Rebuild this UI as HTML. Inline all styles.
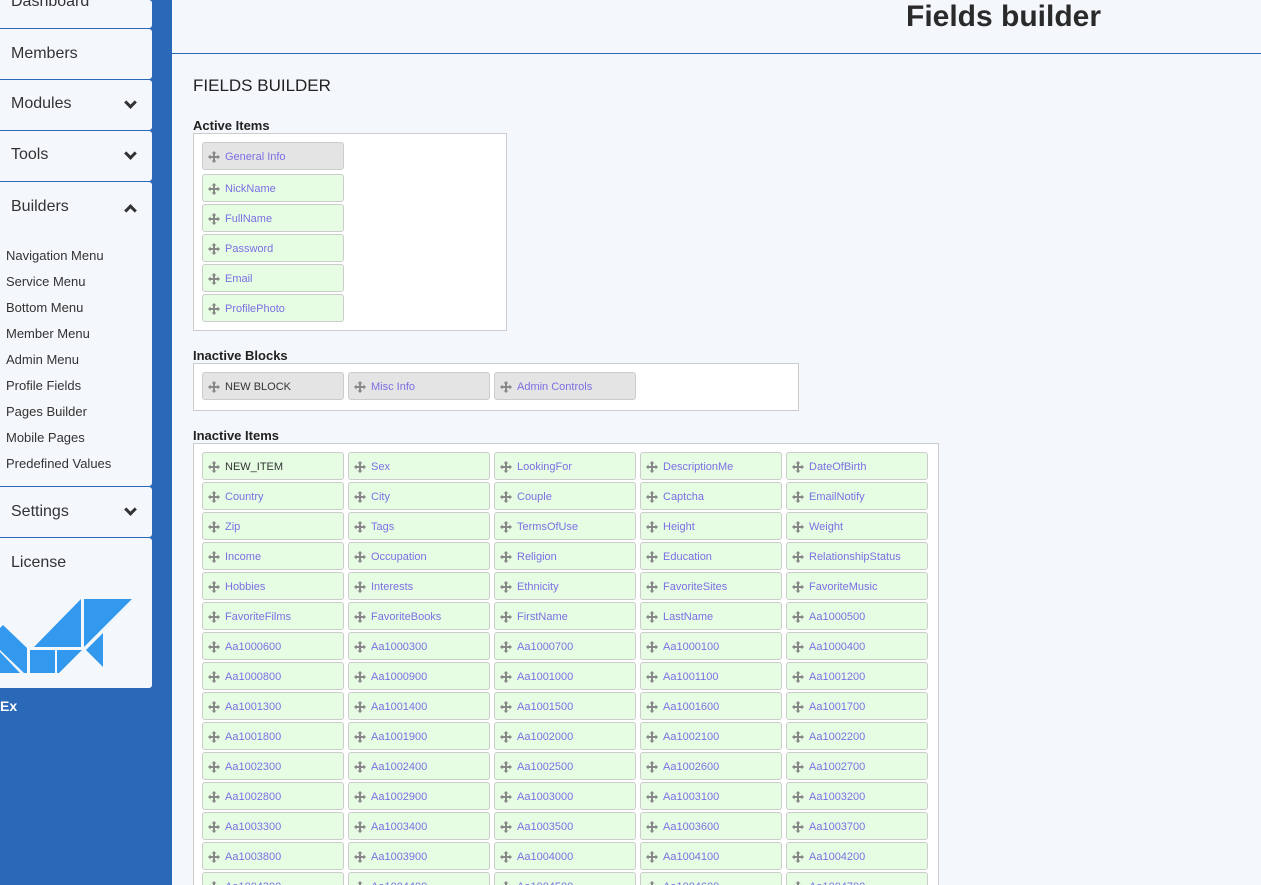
<!DOCTYPE html>
<html><head><meta charset="utf-8"><style>
*{margin:0;padding:0;box-sizing:border-box}
html,body{width:1261px;height:885px;overflow:hidden}
body{background:#f4f7fb;font-family:"Liberation Sans",Arial,sans-serif;position:relative}
.sb{position:absolute;left:0;top:0;width:172px;height:885px;background:#2a69b8}
.p{position:absolute;left:0;width:152px;background:#f4f7fb;border-radius:0 3px 3px 0;overflow:hidden}
.p .t{position:absolute;left:11px;font-size:16px;color:#333}
.chev{position:absolute;left:126px;width:9px;height:9px;border-right:3px solid #333;border-bottom:3px solid #333}
.sub{position:absolute;left:6px;font-size:13px;color:#333}
.hdr{position:absolute;left:172px;top:0;right:0;height:54px;border-bottom:1px solid #2a69b8}
h1{position:absolute;top:0;font-size:30px;font-weight:bold;color:#2a2a2a}
.lbl{position:absolute;left:193px;font-size:13px;font-weight:bold;color:#222}
.box{position:absolute;background:#fff;border:1px solid #ccc}
.it{position:absolute;width:142px;height:28px;border:1px solid #ccc;border-radius:3px;background:#e6fde4;font-size:11px;color:#7b6fe3;line-height:28px;padding-left:22px;white-space:nowrap;overflow:hidden}
.it.g{background:#e4e4e4}
.it.k{color:#333}
.it svg{position:absolute;left:5px;top:8px}
</style></head><body>
<div class="sb">
<div class="p" style="top:0;height:28px"><span class="t" style="top:-7px">Dashboard</span></div>
<div class="p" style="top:29px;height:50px"><span class="t" style="top:16px">Members</span></div>
<div class="p" style="top:80px;height:50px"><span class="t" style="top:15px">Modules</span><span class="chev" style="top:18px;transform:rotate(45deg)"></span></div>
<div class="p" style="top:131px;height:50px"><span class="t" style="top:15px">Tools</span><span class="chev" style="top:18px;transform:rotate(45deg)"></span></div>
<div class="p" style="top:182px;height:304px"><span class="t" style="top:16px">Builders</span><span class="chev" style="top:24px;transform:rotate(225deg)"></span>
<span class="sub" style="top:66px">Navigation Menu</span>
<span class="sub" style="top:92px">Service Menu</span>
<span class="sub" style="top:118px">Bottom Menu</span>
<span class="sub" style="top:144px">Member Menu</span>
<span class="sub" style="top:170px">Admin Menu</span>
<span class="sub" style="top:196px">Profile Fields</span>
<span class="sub" style="top:222px">Pages Builder</span>
<span class="sub" style="top:248px">Mobile Pages</span>
<span class="sub" style="top:274px">Predefined Values</span>
</div>
<div class="p" style="top:487px;height:50px"><span class="t" style="top:16px">Settings</span><span class="chev" style="top:18px;transform:rotate(45deg)"></span></div>
<div class="p" style="top:538px;height:150px"><span class="t" style="top:16px">License</span>
<svg style="position:absolute;left:0;top:0" width="152" height="150" viewBox="0 538 152 150"><g fill="#3399ee">
<polygon points="3,625 27,648 27,673 24,673 0,650 0,628"/>
<polygon points="0,652 20,673 0,673"/>
<polygon points="34,647 81,599 81,647"/>
<polygon points="84,599 132,599 84,647"/>
<polygon points="30,650 55,650 55,673 30,673"/>
<polygon points="57,650 82,650 59,673 57,673"/>
<polygon points="86,650 103,633 103,667"/>
</g></svg></div>
<div style="position:absolute;left:0;top:698px;color:#fff;font-weight:bold;font-size:14px">Ex</div>
</div>
<div class="hdr"><h1 style="left:734px">Fields builder</h1></div>
<div style="position:absolute;left:193px;top:76px;font-size:17px;color:#222">FIELDS BUILDER</div>
<div class="lbl" style="top:118px">Active Items</div>
<div class="box" style="left:193px;top:133px;width:314px;height:198px"></div>
<div class="lbl" style="top:348px">Inactive Blocks</div>
<div class="box" style="left:193px;top:363px;width:606px;height:48px"></div>
<div class="lbl" style="top:428px">Inactive Items</div>
<div class="box" style="left:193px;top:443px;width:746px;height:460px"></div>
<div id="items"></div>
<script>
var ic='<svg width="12" height="12" viewBox="0 0 12 12" fill="#888"><rect x="5" y="1" width="2" height="10"/><rect x="1" y="5" width="10" height="2"/><polygon points="6,0 3.5,2.5 8.5,2.5"/><polygon points="6,12 3.5,9.5 8.5,9.5"/><polygon points="0,6 2.5,3.5 2.5,8.5"/><polygon points="12,6 9.5,3.5 9.5,8.5"/></svg>';
var h='';
function it(x,y,t,c){h+='<div class="it '+(c||'')+'" style="left:'+x+'px;top:'+y+'px">'+ic+t+'</div>';}
it(202,142,'General Info','g');
['NickName','FullName','Password','Email','ProfilePhoto'].forEach(function(t,i){it(202,174+30*i,t)});
it(202,372,'NEW BLOCK','g k');it(348,372,'Misc Info','g');it(494,372,'Admin Controls','g');
var L=['NEW_ITEM','Sex','LookingFor','DescriptionMe','DateOfBirth','Country','City','Couple','Captcha','EmailNotify','Zip','Tags','TermsOfUse','Height','Weight','Income','Occupation','Religion','Education','RelationshipStatus','Hobbies','Interests','Ethnicity','FavoriteSites','FavoriteMusic','FavoriteFilms','FavoriteBooks','FirstName','LastName','Aa1000500','Aa1000600','Aa1000300','Aa1000700','Aa1000100','Aa1000400'];
for(var n=800;n<=4700;n+=100)L.push('Aa'+(1000000+n));
L.forEach(function(t,i){it(202+146*(i%5),452+30*Math.floor(i/5),t,i==0?'k':'')});
document.getElementById('items').innerHTML=h;
</script>
</body></html>
